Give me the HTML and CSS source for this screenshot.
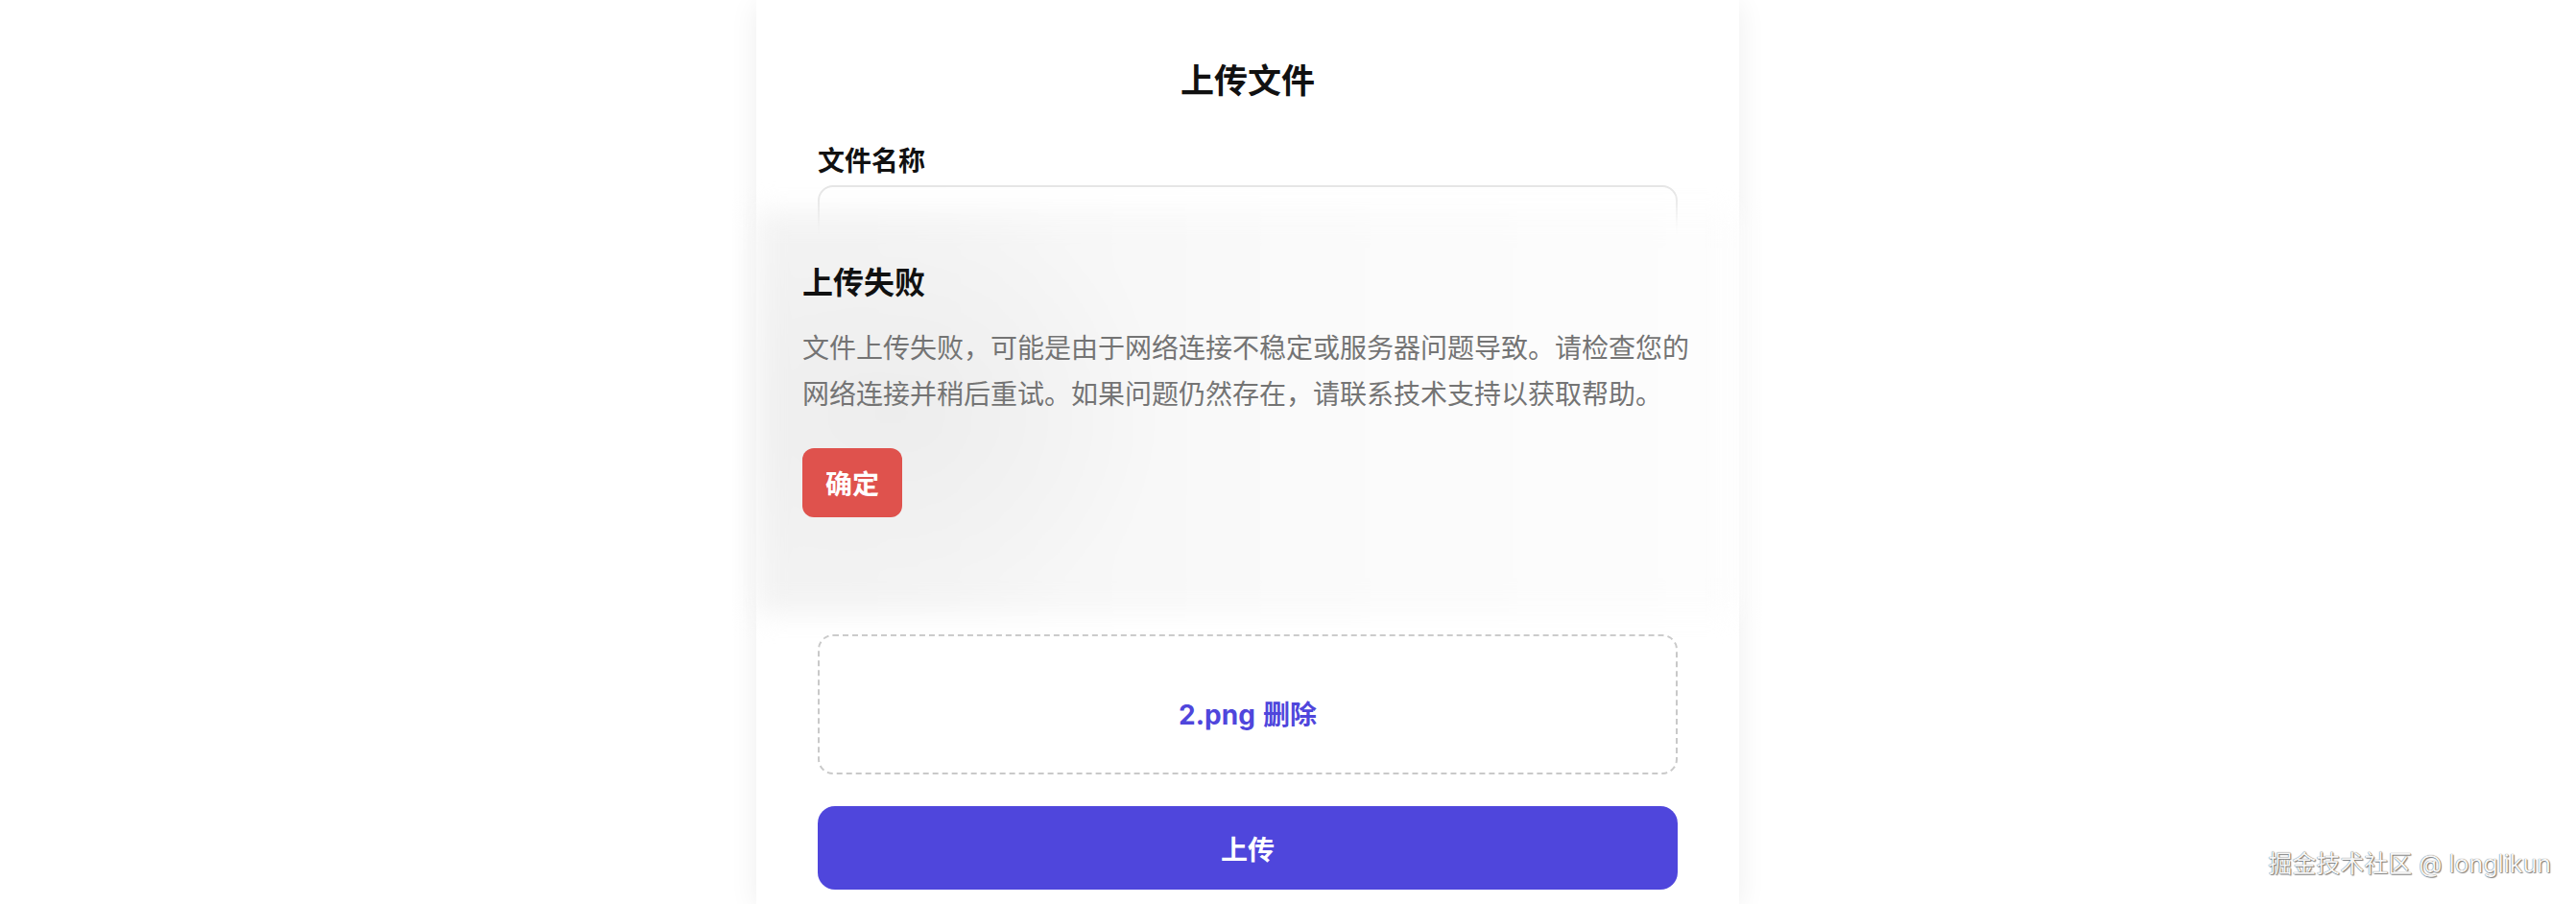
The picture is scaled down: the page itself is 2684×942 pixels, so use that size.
FILE: index.html
```html
<!DOCTYPE html>
<html lang="zh-CN">
<head>
<meta charset="utf-8">
<title>上传文件</title>
<link rel="stylesheet" href="styles.css">
</head>
<body>
<div class="page">
  <div class="card">
    <h1 class="title">上传文件</h1>
    <div class="field">
      <label class="label">文件名称</label>
      <div class="input"></div>
    </div>
    <div class="dropzone">
      <span class="file-name">2.png</span><span class="file-del">删除</span>
    </div>
    <button class="upload-btn">上传</button>

    <div class="dialog">
      <div class="dialog-body">
        <h2 class="dialog-title">上传失败</h2>
        <p class="dialog-text">文件上传失败，可能是由于网络连接不稳定或服务器问题导致。请检查您的网络连接并稍后重试。如果问题仍然存在，请联系技术支持以获取帮助。</p>
        <button class="confirm-btn">确定</button>
      </div>
    </div>
  </div>
</div>
<div class="watermark">掘金技术社区 @ longlikun</div>
</body>
</html>
```

FILE: styles.css
```css
html, body {
  margin: 0;
  padding: 0;
  background: #ffffff;
  height: 100%;
  overflow: hidden;
}

body {
  font-family: Inter, "Noto Sans CJK SC", "Noto Sans", sans-serif;
  color: #111;
}

.page {
  display: flex;
  justify-content: center;
  height: 942px;
  padding-right: 84px;
  box-sizing: border-box;
}

.card {
  position: relative;
  width: 1024px;
  height: 100%;
  box-sizing: border-box;
  padding: 57px 64px 0;
  background: #fff;
  box-shadow: 0 4px 28px rgba(0, 0, 0, 0.07);
  display: flex;
  flex-direction: column;
}

.title {
  margin: 0;
  font-size: 35px;
  line-height: 54px;
  font-weight: 700;
  text-align: center;
  color: #111;
}

.field {
  margin-top: 37px;
  display: flex;
  flex-direction: column;
}

.label {
  font-size: 28px;
  line-height: 40px;
  font-weight: 600;
  color: #111;
  margin-bottom: 5px;
}

.input {
  height: 84px;
  border: 2px solid #e6e6e6;
  border-radius: 16px;
  box-sizing: border-box;
}

.dropzone {
  margin-top: 384px;
  height: 146px;
  box-sizing: border-box;
  border: 2px dashed #c9c9c9;
  border-radius: 16px;
  display: flex;
  justify-content: center;
  align-items: flex-start;
  padding-top: 62px;
  gap: 8px;
  font-size: 28px;
  line-height: 40px;
  font-weight: 700;
  color: #4f46dc;
}

.upload-btn {
  margin-top: 33px;
  height: 87px;
  flex-shrink: 0;
  border: none;
  border-radius: 18px;
  background: #4f46dc;
  color: #fff;
  font-family: inherit;
  font-size: 28px;
  font-weight: 700;
}

.dialog {
  position: absolute;
  left: 0;
  right: 0;
  top: 220px;
  height: 420px;
}

.dialog::before {
  content: "";
  position: absolute;
  inset: 0;
  background:
    radial-gradient(ellipse 28% 55% at 14% 50%, rgba(236, 236, 236, 0.9), rgba(236, 236, 236, 0) 100%),
    linear-gradient(90deg, #f3f3f3 0%, #f6f6f6 25%, #fafafa 55%, #fdfdfd 100%);
  filter: blur(14px);
}

.dialog-body {
  position: relative;
  padding: 51px 48px 0;
  display: flex;
  flex-direction: column;
  align-items: flex-start;
}

.dialog-title {
  margin: 0;
  font-size: 32px;
  line-height: 48px;
  font-weight: 700;
  color: #111;
}

.dialog-text {
  margin: 20px 0 0;
  width: 928px;
  font-size: 28px;
  line-height: 48px;
  color: #747474;
}

.confirm-btn {
  margin-top: 32px;
  height: 72px;
  padding: 0 24px;
  border: none;
  border-radius: 12px;
  background: #df524d;
  color: #fff;
  font-family: inherit;
  font-size: 28px;
  font-weight: 700;
}

.watermark {
  position: absolute;
  right: 26px;
  bottom: 26px;
  font-size: 25px;
  line-height: 32px;
  color: #f6f6f6;
  text-shadow: 0 0 1px rgba(0, 0, 0, 0.75), 1px 1px 1px rgba(0, 0, 0, 0.45);
}
```
